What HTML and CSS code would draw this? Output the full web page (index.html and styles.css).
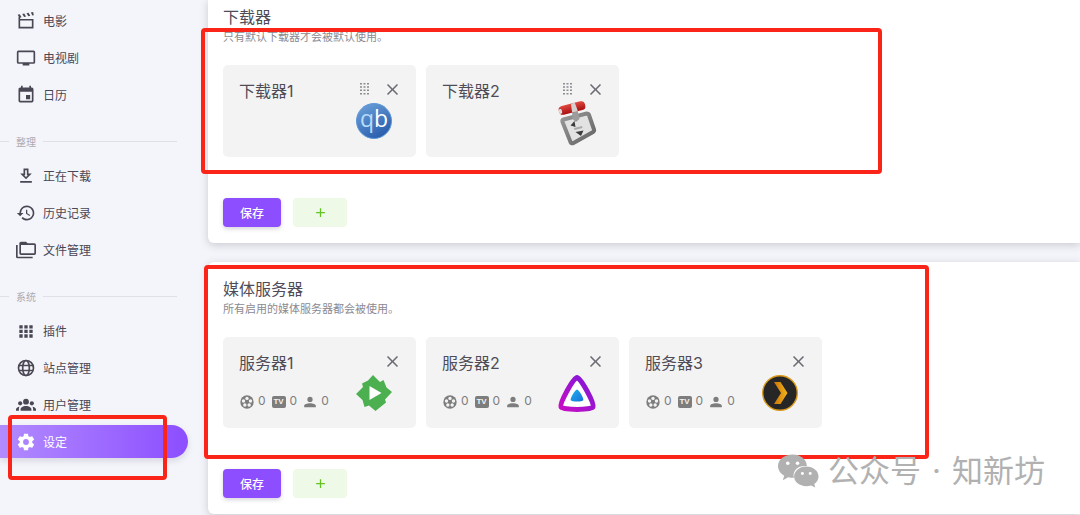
FILE: index.html
```html
<!DOCTYPE html>
<html lang="zh-CN">
<head>
    <meta charset="UTF-8">
    <meta name="viewport" content="width=device-width, initial-scale=1.0">
    <title>设定</title>
    <link rel="stylesheet" href="styles.css">
</head>
<body>

    <!-- shared icons -->
    <svg class="sprite" aria-hidden="true">
        <symbol id="i-close" viewBox="0 0 24 24"><path d="M19 6.41L17.59 5 12 10.59 6.41 5 5 6.41 10.59 12 5 17.59 6.41 19 12 13.41 17.59 19 19 17.59 13.41 12z"/></symbol>
        <symbol id="i-drag" viewBox="0 0 9 12"><path d="M0 0h2v1.500H0zM3.500 0h2v1.500h-2zM7 0h2v1.500H7zM0 3.300h2v1.500H0zM3.500 3.300h2v1.500h-2zM7 3.300h2v1.500H7zM0 6.600h2v1.500H0zM3.500 6.600h2v1.500h-2zM7 6.600h2v1.500H7zM0 9.900h2v1.500H0zM3.500 9.900h2v1.500h-2zM7 9.900h2v1.500H7z"/></symbol>
        <symbol id="i-reel" viewBox="0 0 24 24"><circle cx="12" cy="12" r="11.500"/><g fill="#f3f3f3"><circle cx="12" cy="5.800" r="2.900"/><circle cx="18" cy="10.200" r="2.900"/><circle cx="15.700" cy="17.200" r="2.900"/><circle cx="8.300" cy="17.200" r="2.900"/><circle cx="6" cy="10.200" r="2.900"/></g></symbol>
        <symbol id="i-user" viewBox="0 0 24 24"><path d="M12 3a4.500 4.500 0 1 1 0 9 4.500 4.500 0 0 1 0-9zM12 14c5 0 10 1.800 10 4.500V21H2v-2.500C2 15.800 7 14 12 14z"/></symbol>
    </svg>

    <div class="layout">
        <nav class="sidebar">
            <a class="nav-item" href="#">
                <svg viewBox="0 0 24 24"><path class="line" d="M4 10.500h16v9.500H4zM4 10V7"/><path d="M2 4.500l2.500-.6 2.200 3.600-2.600.6zM7.500 3.600l2.400-.6 2.200 3.600-2.400.6zM12.600 2.700l2.400-.6 2.200 3.600-2.400.6zM17.800 1.900l2.800-.6.8 3.800-1.800.4z"/></svg>
                <span>电影</span>
            </a>
            <a class="nav-item" href="#">
                <svg viewBox="0 0 24 24"><path d="M21 17H3V5h18m0-2H3a2 2 0 0 0-2 2v12a2 2 0 0 0 2 2h5v2h8v-2h5a2 2 0 0 0 2-2V5a2 2 0 0 0-2-2z"/></svg>
                <span>电视剧</span>
            </a>
            <a class="nav-item" href="#">
                <svg viewBox="0 0 24 24"><path d="M19 19H5V8h14m-3-7v2H8V1H6v2H5c-1.110 0-2 .89-2 2v14a2 2 0 0 0 2 2h14a2 2 0 0 0 2-2V5a2 2 0 0 0-2-2h-1V1m-1 11h-5v5h5z"/></svg>
                <span>日历</span>
            </a>
            <div class="nav-title">整理</div>
            <a class="nav-item" href="#">
                <svg viewBox="0 0 24 24"><path d="M13 5v6h1.170L12 13.170 9.830 11H11V5h2m2-2H9v6H5l7 7 7-7h-4V3m4 15H5v2h14v-2z"/></svg>
                <span>正在下载</span>
            </a>
            <a class="nav-item" href="#">
                <svg viewBox="0 0 24 24"><path d="M13.500 8H12v5l4.280 2.540.72-1.210-3.500-2.080V8M13 3a9 9 0 0 0-9 9H1l3.960 4.030L9 12H6a7 7 0 1 1 2.060 4.940l-1.420 1.420A9 9 0 1 0 13 3"/></svg>
                <span>历史记录</span>
            </a>
            <a class="nav-item" href="#">
                <svg viewBox="0 0 24 24"><path d="M22 4h-8l-2-2H6a2 2 0 0 0-2 2v12a2 2 0 0 0 2 2h16a2 2 0 0 0 2-2V6a2 2 0 0 0-2-2m0 12H6V6h16M2 6H0v14a2 2 0 0 0 2 2h18v-2H2z"/></svg>
                <span>文件管理</span>
            </a>
            <div class="nav-title">系统</div>
            <a class="nav-item" href="#">
                <svg viewBox="0 0 24 24"><path d="M4 5h4v4H4zM10 5h4v4h-4zM16 5h4v4h-4zM4 10.500h4v4H4zM10 10.500h4v4h-4zM16 10.500h4v4h-4zM4 16h4v4H4zM10 16h4v4h-4zM16 16h4v4h-4z"/></svg>
                <span>插件</span>
            </a>
            <a class="nav-item" href="#">
                <svg viewBox="0 0 24 24"><g class="line"><circle cx="12" cy="12" r="9"/><ellipse cx="12" cy="12" rx="4" ry="9"/><path d="M3.500 9h17M3.500 15h17"/></g></svg>
                <span>站点管理</span>
            </a>
            <a class="nav-item" href="#">
                <svg viewBox="0 0 24 24"><circle cx="12" cy="8" r="3.500"/><circle cx="5" cy="10" r="2.500"/><circle cx="19" cy="10" r="2.500"/><path d="M5.500 19v-1.800c0-2.400 3-4 6.500-4s6.500 1.600 6.500 4V19zM0 19v-1.500c0-1.700 1.800-3 4.400-3.300C3.600 15 3.500 16 3.500 17v2zM24 19v-1.500c0-1.700-1.800-3-4.400-3.300.8.8.9 1.800.9 2.800v2z"/></svg>
                <span>用户管理</span>
            </a>
            <a class="nav-item active" href="#">
                <svg viewBox="0 0 24 24"><path d="M12 15.500A3.500 3.500 0 0 1 8.500 12 3.500 3.500 0 0 1 12 8.500a3.500 3.500 0 0 1 3.500 3.500 3.500 3.500 0 0 1-3.500 3.500m7.430-2.530c.04-.32.07-.64.07-.97s-.03-.66-.07-1l2.110-1.630c.19-.15.24-.42.12-.64l-2-3.460c-.12-.22-.39-.31-.61-.22l-2.490 1c-.52-.39-1.060-.73-1.690-.98l-.37-2.650A.506.506 0 0 0 14 2h-4c-.25 0-.46.18-.5.42l-.37 2.650c-.63.25-1.170.59-1.690.98l-2.490-1c-.22-.09-.49 0-.61.22l-2 3.460c-.13.22-.07.49.12.64L4.570 11c-.04.34-.07.67-.07 1s.03.65.07.97l-2.110 1.660c-.19.15-.25.42-.12.64l2 3.460c.12.22.39.3.61.22l2.490-1.010c.52.4 1.060.74 1.690.99l.37 2.650c.04.24.25.42.5.42h4c.25 0 .46-.18.5-.42l.37-2.650c.63-.26 1.170-.59 1.690-.99l2.490 1.010c.22.08.49 0 .61-.22l2-3.460c.12-.22.07-.49-.12-.64z"/></svg>
                <span>设定</span>
            </a>
            <div class="mark mark-nav"></div>
        </nav>

        <main class="content">
            <section class="panel">
                <h2>下载器</h2>
                <p>只有默认下载器才会被默认使用。</p>
                <div class="tiles">
                    <div class="tile">
                        <div class="tile-head">
                            <h3>下载器1</h3>
                            <button class="icon-btn" aria-label="排序"><svg class="drag"><use href="#i-drag"/></svg></button>
                            <button class="icon-btn" aria-label="删除"><svg><use href="#i-close"/></svg></button>
                        </div>
                        <div class="tile-body">
                            <svg class="logo" viewBox="0 0 36 36">
                                <defs><linearGradient id="qb" x1="0" y1="0" x2="0.600" y2="1"><stop offset="0" stop-color="#6fa4dc"/><stop offset="1" stop-color="#2b5fae"/></linearGradient></defs>
                                <circle cx="18" cy="18" r="17.500" fill="url(#qb)" stroke="#5d97d8"/>
                                <text class="qb-text" x="18" y="24"><tspan fill="#b9dcfb">q</tspan><tspan fill="#fff">b</tspan></text>
                            </svg>
                        </div>
                    </div>
                    <div class="tile">
                        <div class="tile-head">
                            <h3>下载器2</h3>
                            <button class="icon-btn" aria-label="排序"><svg class="drag"><use href="#i-drag"/></svg></button>
                            <button class="icon-btn" aria-label="删除"><svg><use href="#i-close"/></svg></button>
                        </div>
                        <div class="tile-body">
                            <svg class="logo" viewBox="0 0 36 36">
                                <defs>
                                    <linearGradient id="tr" x1="0" y1="0" x2="1" y2="1"><stop offset="0" stop-color="#999"/><stop offset="1" stop-color="#636363"/></linearGradient>
                                    <linearGradient id="tr2" x1="0" y1="0" x2="0" y2="1"><stop offset="0" stop-color="#e04a40"/><stop offset="1" stop-color="#a80f12"/></linearGradient>
                                </defs>
                                <path d="M4.500 16.500L27.500 10.500Q29.500 10.500 30 12L35 26.500Q35.500 28 34 29L14.500 40Q12.500 41 11.500 39L3.500 19Q3 17 4.500 16.500z" fill="#e2e2e2" stroke="url(#tr)" stroke-width="4"/>
                                <path d="M15.500 18l-4 4.500 5 1.500zM22 33l-5.500-4 8-1.500z" fill="#3c3c3c"/>
                                <path d="M15 25l8-2 .5 2-8 2z" fill="#aaa"/>
                                <path d="M13 6l5-1 2.500 11-3.500 3-3.500-3z" fill="#9c9c9c"/>
                                <g transform="rotate(-14 13 5)">
                                    <rect x="-.5" y=".5" width="27" height="9" rx="4" fill="url(#tr2)"/>
                                    <rect x="-.5" y="3" width="3" height="5" rx="1.500" fill="#ddd"/>
                                    <path d="M13 .5h4l1 9h-6z" fill="#d5d0cd"/>
                                </g>
                            </svg>
                        </div>
                    </div>
                </div>
                <div class="actions">
                    <button class="btn-save">保存</button>
                    <button class="btn-add" aria-label="添加"><svg viewBox="0 0 24 24"><path d="M19 13h-6v6h-2v-6H5v-2h6V5h2v6h6z"/></svg></button>
                </div>
                <div class="mark mark-downloader"></div>
            </section>

            <section class="panel">
                <h2>媒体服务器</h2>
                <p>所有启用的媒体服务器都会被使用。</p>
                <div class="tiles">
                    <div class="tile server">
                        <div class="tile-head">
                            <h3>服务器1</h3>
                            <button class="icon-btn" aria-label="删除"><svg><use href="#i-close"/></svg></button>
                        </div>
                        <div class="tile-body">
                            <div class="stats">
                                <span><svg><use href="#i-reel"/></svg>0</span>
                                <span><b class="tv">TV</b>0</span>
                                <span><svg><use href="#i-user"/></svg>0</span>
                            </div>
                            <svg class="logo" viewBox="0 0 36 36">
                                <path d="M17 0l7 7 3.500-2 3 7.500L36 17l-7 7.500 1 3L19.500 36 13 30.500 8.500 32 6.500 25 0 19l7-7-1-3.500 6-3z" fill="#4caf50"/>
                                <path d="M13.500 11v14l12-7z" fill="#fff"/>
                            </svg>
                        </div>
                    </div>
                    <div class="tile server">
                        <div class="tile-head">
                            <h3>服务器2</h3>
                            <button class="icon-btn" aria-label="删除"><svg><use href="#i-close"/></svg></button>
                        </div>
                        <div class="tile-body">
                            <div class="stats">
                                <span><svg><use href="#i-reel"/></svg>0</span>
                                <span><b class="tv">TV</b>0</span>
                                <span><svg><use href="#i-user"/></svg>0</span>
                            </div>
                            <svg class="logo" viewBox="0 0 36 36">
                                <defs>
                                    <linearGradient id="jf" x1="1" y1="0" x2="0" y2="1"><stop offset="0" stop-color="#7b18d8"/><stop offset="1" stop-color="#c80fc4"/></linearGradient>
                                    <linearGradient id="jf2" x1="0" y1="0" x2="1" y2="1"><stop offset="0" stop-color="#1fb0ee"/><stop offset="1" stop-color="#1673d8"/></linearGradient>
                                </defs>
                                <path d="M18 2.500C21.500 2.500 35.500 28 34 32c-1.500 3.200-30.500 3.200-32 0C.5 28 14.500 2.500 18 2.500z" fill="#fff" stroke="url(#jf)" stroke-width="5"/>
                                <path d="M18 14.500c2 0 7 9 6.300 10.800-.8 1.600-11.800 1.600-12.600 0-.7-1.800 4.300-10.800 6.300-10.800z" fill="url(#jf2)"/>
                            </svg>
                        </div>
                    </div>
                    <div class="tile server">
                        <div class="tile-head">
                            <h3>服务器3</h3>
                            <button class="icon-btn" aria-label="删除"><svg><use href="#i-close"/></svg></button>
                        </div>
                        <div class="tile-body">
                            <div class="stats">
                                <span><svg><use href="#i-reel"/></svg>0</span>
                                <span><b class="tv">TV</b>0</span>
                                <span><svg><use href="#i-user"/></svg>0</span>
                            </div>
                            <svg class="logo" viewBox="0 0 36 36">
                                <defs><linearGradient id="px" x1="0" y1="0" x2="1" y2="0"><stop offset="0" stop-color="#c9750c"/><stop offset="1" stop-color="#f5b31a"/></linearGradient></defs>
                                <circle cx="18" cy="18" r="17.300" fill="#262626" stroke="#d99a1c" stroke-width="1.400"/>
                                <path d="M12 7h6.500l7 11-7 11H12l7-11z" fill="url(#px)"/>
                            </svg>
                        </div>
                    </div>
                </div>
                <div class="actions">
                    <button class="btn-save">保存</button>
                    <button class="btn-add" aria-label="添加"><svg viewBox="0 0 24 24"><path d="M19 13h-6v6h-2v-6H5v-2h6V5h2v6h6z"/></svg></button>
                </div>
                <div class="mark mark-server"></div>
            </section>
        </main>
    </div>

    <div class="watermark">
        <svg viewBox="0 0 42 34">
            <path d="M15 0c8 0 14.500 5 14.500 11.500v.5C21 11 15.500 16 16 22.500c.1.700.2 1 .4 1.500-2 .1-4-.1-5.900-.7L5 26.500l1.300-4.700C2.500 19.500 0 15.800 0 11.800 0 5.200 6.700 0 15 0z"/>
            <path d="M29 12.500c7 0 12.500 4.500 12.500 10.200 0 3.100-1.700 5.800-4.300 7.700l1 3.600-4.400-2.200c-1.500.5-3.100.7-4.800.7-7 0-12.500-4.300-12.500-9.800s5.500-10.200 12.500-10.200z"/>
            <g fill="#fff"><circle cx="10" cy="9" r="1.800"/><circle cx="20" cy="9" r="1.800"/><circle cx="25" cy="19.500" r="1.500"/><circle cx="33" cy="19.500" r="1.500"/></g>
        </svg>
        <span>公众号</span><span class="dot">·</span><span>知新坊</span>
    </div>

</body>
</html>
```
FILE: styles.css
```css
* { box-sizing: border-box; }
body { margin: 0; background: #f4f5fa; color: #4f4c58; font-family: Inter, 'Noto Sans CJK SC', sans-serif; font-size: 12px; }
h2, h3, p { margin: 0; font-weight: 400; }
button { border: none; padding: 0; font-family: inherit; cursor: pointer; }
svg { fill: currentColor; flex: none; }
.sprite { display: none; }
.line { fill: none; stroke: currentColor; stroke-width: 2; }
.qb-text { font: 23px 'Open Sans', sans-serif; text-anchor: middle; }

.layout { display: flex; min-height: 100vh; overflow: hidden; }

/* sidebar */
.sidebar { position: relative; flex: none; width: 208px; padding: 4px 20px 0 0; display: flex; flex-direction: column; gap: 4px; }
.nav-item { display: flex; align-items: center; gap: 7px; height: 33px; padding-left: 16px; border-radius: 0 17px 17px 0; color: #4a4755; font-size: 12px; text-decoration: none; }
.nav-item svg { width: 20px; height: 20px; }
.nav-item.active { color: #fff; background: linear-gradient(90deg, #b28bff, #8c4eff); box-shadow: 0 3px 6px rgba(60,50,90,0.15); }
.nav-title { display: flex; align-items: center; gap: 7px; height: 28px; margin-top: 12px; padding-right: 11px; color: #acaab3; font-size: 10px; }
.nav-title::before, .nav-title::after { content: ''; height: 1px; background: #dfdfe5; }
.nav-title::before { width: 9px; }
.nav-title::after { flex: 1; }

/* panels */
.content { flex: 1; min-width: 0; display: flex; flex-direction: column; gap: 19px; }
.panel { position: relative; padding: 15px 15px 16px; background: #fff; border-radius: 6px 0 0 6px; box-shadow: 0 2px 8px rgba(50,45,70,0.22); }
.panel:first-child { padding-top: 5px; border-top-left-radius: 0; }
.panel h2 { font-size: 16px; line-height: 24px; }
.panel p { color: #8b8991; font-size: 11px; line-height: 16px; }
.tiles { display: flex; flex-wrap: wrap; gap: 10px; margin-top: 20px; }
.tile { width: 193px; padding: 12px 16px 18px; background: #f3f3f3; border-radius: 5px; }
.tile.server { padding-bottom: 17px; }
.tile-head { display: flex; align-items: flex-start; gap: 4px; height: 26px; }
.tile-head h3 { flex: 1; font-size: 16px; line-height: 29px; }
.icon-btn { display: flex; align-items: center; justify-content: center; width: 24px; height: 24px; background: none; color: #6d6b73; }
.icon-btn:last-child { margin-right: -4px; }
.icon-btn svg { width: 19px; height: 19px; }
.icon-btn .drag { width: 9px; height: 12px; color: #8d8b92; }
.tile-body { display: flex; align-items: flex-end; justify-content: space-between; padding-right: 8px; }
.logo { width: 36px; height: 36px; margin-left: auto; overflow: visible; }
.stats { display: flex; gap: 6px; padding: 0 0 2px 1px; color: #7d7d7d; font-size: 12px; line-height: 16px; }
.stats span { display: flex; gap: 4px; }
.stats svg { width: 14px; height: 14px; margin-top: 2px; }
.tv { width: 14px; height: 12px; margin-top: 3px; border-radius: 2px; background: #7d7d7d; color: #f3f3f3; font: bold 8px/12px 'Liberation Sans', sans-serif; text-align: center; }

.actions { display: flex; gap: 12px; margin-top: 41px; }
.btn-save { width: 58px; height: 29px; border-radius: 4px; background: #8c4eff; color: #fff; font-size: 12px; font-weight: 500; box-shadow: 0 2px 4px rgba(60,50,90,0.2); }
.btn-add { display: flex; align-items: center; justify-content: center; width: 54px; height: 29px; border-radius: 4px; background: #eef9e8; color: #62c322; }
.btn-add svg { width: 15px; height: 15px; }

/* red callouts drawn over the page */
.mark { position: absolute; z-index: 2; border: 4px solid #fb2418; border-radius: 4px; pointer-events: none; }
.mark-nav { left: 8px; top: 415px; width: 159px; height: 65px; }
.mark-downloader { left: -7px; top: 28px; width: 681px; height: 146px; }
.mark-server { left: -4px; top: 3px; width: 725px; height: 194px; }

.watermark { position: absolute; z-index: 3; right: 35px; bottom: 21px; display: flex; align-items: center; color: #b1b1b1; font-size: 31px; line-height: 46px; }
.watermark svg { width: 41px; height: 34px; margin-right: 9px; }
.watermark .dot { width: 31px; text-align: center; }
```
